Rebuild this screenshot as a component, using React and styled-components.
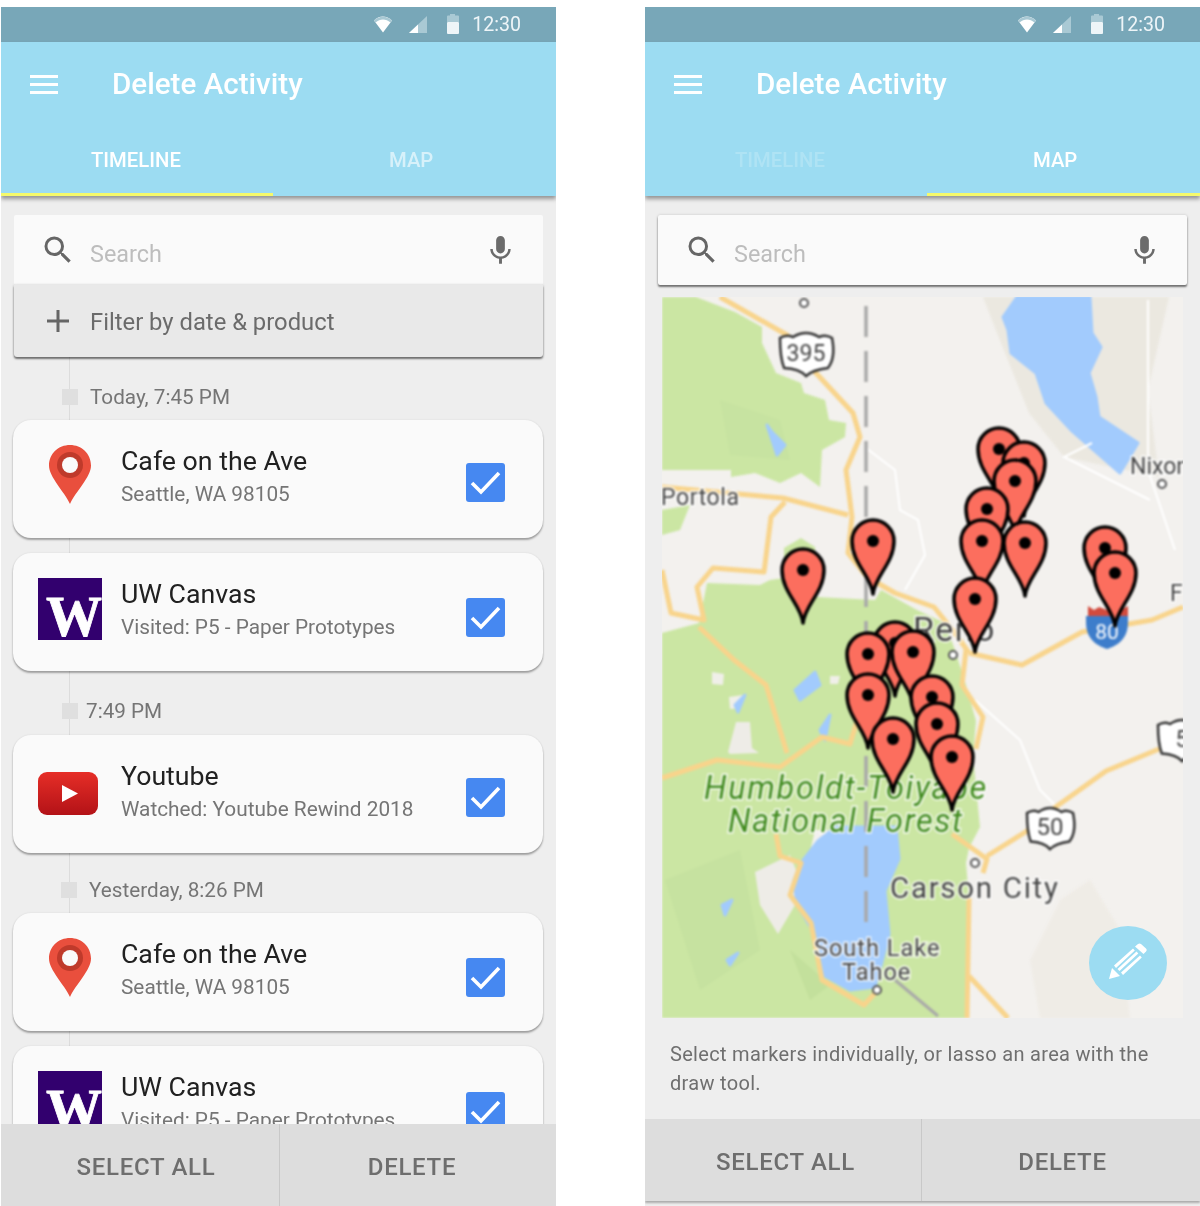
import React from "react";
import styled, { createGlobalStyle } from "styled-components";

const Global = createGlobalStyle`
  html, body { margin: 0; padding: 0; background: #fff; }
  * { box-sizing: border-box; }
  #root { font-family: Roboto, "Liberation Sans", sans-serif; }
`;

const Page = styled.div`
  width: 1200px; height: 1206px; overflow: hidden;
  display: flex; gap: 89px; padding: 7px 0 0 1px;
  align-items: flex-start;
`;
const Phone = styled.div`
  width: 555px; height: 1199px; flex: none;
  display: flex; flex-direction: column;
  background: #eeeeee; overflow: hidden;
  filter: blur(0.35px);
`;
const StatusBar = styled.div`
  height: 35px; flex: none; background: #78a7b8;
  display: flex; align-items: center; justify-content: flex-end;
  padding-right: 35px; color: #eef5f8;
  font-size: 19.6px; font-weight: 400;
`;
const StatusIcons = styled.svg`
  width: 90px; height: 35px; margin-right: 8px; flex: none;
`;
const AppBar = styled.header`
  position: relative; z-index: 2; height: 154px; flex: none;
  background: #9cdcf2; color: #fff;
  display: flex; flex-direction: column;
  box-shadow: 0 3px 4px rgba(0,0,0,.38);
`;
const Toolbar = styled.div`
  height: 84px; flex: none; display: flex; align-items: center; padding-left: 29px;
`;
const Burger = styled.div`
  width: 28px; height: 19px; margin-right: 54px; flex: none;
  border-top: 3px solid #fff; border-bottom: 3px solid #fff;
  display: flex; align-items: center;
  &::before { content: ""; display: block; width: 100%; height: 3px; background: #fff; }
`;
const Title = styled.h1`
  margin: 0; font-size: 29.6px; font-weight: 500; line-height: 34px;
`;
const Tabs = styled.div`
  flex: 1; display: flex;
`;
const Tab = styled.div`
  width: ${p => p.$w}px; flex: none;
  padding: 22px 0 0 ${p => p.$pad}px;
  font-size: 20.3px; font-weight: 500; line-height: 24px;
  color: rgba(255,255,255,${p => p.$dim});
  border-bottom: 3px solid ${p => p.$active ? "#f5f96a" : "transparent"};
`;
const Body = styled.div`
  flex: 1; min-height: 0; position: relative; overflow: hidden;
  padding: 19px 13px 0;
  &::before {
    content: ""; position: absolute; left: 68px; top: 161px; bottom: 0; width: 1px;
    background: #dcdcdc; display: ${p => p.$rail ? "block" : "none"};
  }
`;
const SearchCard = styled.div`
  position: relative; height: 70px; background: #fafafa; border-radius: 2px;
  display: flex; align-items: center; padding: 0 25px 0 26px;
  box-shadow: 0 0 3px rgba(0,0,0,.16), ${p => p.$raised ? "0 2px 2px rgba(0,0,0,.5)" : "none"};
`;
const SearchText = styled.span`
  flex: 1; margin-left: 14px; padding-top: 8px; font-size: 23.4px; color: #bdbdbd;
`;
const FilterRow = styled.div`
  position: relative; height: 72px; background: #e9e9e9;
  border-radius: 0 0 3px 3px;
  display: flex; align-items: center; padding-left: 33px; gap: 21px;
  font-size: 23.8px; color: #6b6b6b;
  box-shadow: 0 0 3px rgba(0,0,0,.2), 0 2px 2px rgba(0,0,0,.5);
`;
const FilterLabel = styled.span`
  padding-top: 1px;
`;
const TimeRow = styled.div`
  position: relative; height: 24px; display: flex; align-items: center;
  margin: ${p => p.$top}px 0 ${p => p.$bottom}px ${p => p.$sq}px;
  font-size: 20.7px; color: #757575;
`;
const Square = styled.span`
  width: 16px; height: 16px; background: #dfdfdf; flex: none;
  margin-right: ${p => p.$gap}px;
`;
const Card = styled.article`
  position: relative; height: 118px; margin: 0 0 ${p => p.$gap || 0}px -1px;
  background: #fafafa; border-radius: 18px;
  box-shadow: 0 0 2px rgba(0,0,0,.1), 0 2px 2px rgba(0,0,0,.32);
  display: flex;
`;
const IconSlot = styled.div`
  width: 108px; flex: none; display: flex; justify-content: center;
  padding: ${p => p.$top}px 0 0 ${p => p.$left}px;
`;
const CardText = styled.div`
  flex: 1; padding-top: 23px;
`;
const CardTitle = styled.div`
  font-size: 26.7px; line-height: 36px; color: #212121;
`;
const CardSub = styled.div`
  font-size: 20.8px; line-height: 30px; color: #757575;
`;
const Check = styled.div`
  width: 39px; height: 39px; flex: none; border-radius: 3px;
  background: #4688f1; margin: ${p => p.$top}px 38px 0 0;
  display: flex; align-items: center; justify-content: center;
`;
const ActionBar = styled.div`
  position: relative; z-index: 2; height: 82px; flex: none; background: #dddddd;
  display: flex; margin-bottom: ${p => p.$bottom || 0}px;
  box-shadow: ${p => p.$bottom ? "0 2px 2px rgba(0,0,0,.28)" : "none"};
`;
const Action = styled.div`
  width: ${p => p.$w}px; flex: ${p => p.$w ? "none" : 1};
  display: flex; align-items: center; justify-content: center;
  font-size: 24px; font-weight: 500; letter-spacing: .7px; color: #6e6e6e;
  border-right: ${p => p.$w ? "1px solid #c8c8c8" : "none"};
  padding: ${p => p.$pt || 0}px ${p => p.$pr || 0}px 0 ${p => p.$pl || 0}px;
`;
const MapFrame = styled.div`
  position: relative; height: 721px; width: 521px; margin: 12px 0 0 4px; overflow: hidden;
`;
const MapSvg = styled.svg`
  display: block; width: 521px; height: 721px;
`;
const MapBlur = styled.g`
  filter: blur(1px);
`;
const Fab = styled.div`
  position: absolute; left: 427px; top: 629px; width: 78px; height: 74px; border-radius: 50%;
  background: #9cdcf2; display: flex; align-items: center; justify-content: center;
`;
const Caption = styled.p`
  margin: 22px 0 0 12px; width: 510px;
  font-size: 20px; line-height: 29px; letter-spacing: .31px; color: #6f6f6f;
`;
const PlaceLabel = styled.text`
  font-family: Roboto, "Liberation Sans", sans-serif;
  font-size: ${p => p.$size}px;
  font-style: ${p => p.$italic ? "italic" : "normal"};
  fill: ${p => p.$fill || "#444"};
  stroke: rgba(255,255,255,.85); stroke-width: 3px; paint-order: stroke;
  letter-spacing: ${p => p.$ls || 0}px;
`;
const ShieldText = styled.text`
  font-family: Roboto, "Liberation Sans", sans-serif;
  font-size: ${p => p.$size}px; fill: ${p => p.$fill || "#444"}; text-anchor: middle;
`;
const LogoLetter = styled.text`
  font-family: "Liberation Serif", serif; font-weight: 700; fill: #fff; text-anchor: middle;
  stroke: #fff; stroke-width: .8px;
`;

const PinIcon = () => (
  <svg width="42" height="59" viewBox="0 0 42 59">
    <path d="M21 59C15 46 0 32 0 20.5 0 8.5 9.5 0 21 0s21 8.5 21 20.5C42 32 27 46 21 59z" fill="#e94f3d" />
    <circle cx="21" cy="20" r="13" fill="#bf3a2b" />
    <circle cx="21" cy="20" r="8" fill="#fafafa" />
  </svg>
);
const UwIcon = () => (
  <svg width="64" height="62" viewBox="0 0 64 62">
    <rect width="64" height="62" fill="#32006e" />
    <LogoLetter x="36" y="58" fontSize="58" textLength="56" lengthAdjust="spacingAndGlyphs">W</LogoLetter>
  </svg>
);
const YtIcon = () => (
  <svg width="60" height="43" viewBox="0 0 60 43">
    <defs>
      <linearGradient id="ytg" x1="0" y1="0" x2="0" y2="1">
        <stop offset="0" stopColor="#e62e27" />
        <stop offset="1" stopColor="#b31217" />
      </linearGradient>
    </defs>
    <rect width="60" height="43" rx="9" fill="url(#ytg)" />
    <path d="M24 13l16 8.5L24 30z" fill="#fff" />
  </svg>
);
const CheckMark = () => (
  <svg width="31" height="25" viewBox="0 0 31 25">
    <path d="M2 13l9 9L29 3" fill="none" stroke="#fff" strokeWidth="3.6" />
  </svg>
);
const SearchIcon = () => (
  <svg width="36" height="36" viewBox="0 0 24 24" fill="#666">
    <path d="M15.5 14h-.79l-.28-.27A6.471 6.471 0 0 0 16 9.5 6.5 6.5 0 1 0 9.5 16c1.61 0 3.09-.59 4.23-1.57l.27.28v.79l5 4.99L20.49 19l-4.99-5zm-6 0C7.01 14 5 11.99 5 9.5S7.01 5 9.5 5 14 7.01 14 9.5 11.99 14 9.5 14z" />
  </svg>
);
const MicIcon = () => (
  <svg width="35" height="35" viewBox="0 0 24 24" fill="#6b6b6b">
    <path d="M12 14c1.66 0 2.99-1.34 2.99-3L15 5c0-1.66-1.34-3-3-3S9 3.34 9 5v6c0 1.66 1.34 3 3 3zm5.3-3c0 3-2.54 5.1-5.3 5.1S6.7 14 6.7 11H5c0 3.41 2.72 6.23 6 6.72V21h2v-3.28c3.28-.48 6-3.3 6-6.72h-1.7z" />
  </svg>
);
const PlusIcon = () => (
  <svg width="22" height="22" viewBox="0 0 22 22">
    <path d="M11 0v22M0 11h22" stroke="#666" strokeWidth="3" />
  </svg>
);
const PencilIcon = () => (
  <svg width="40" height="40" viewBox="0 0 40 40" fill="#fff">
    <path d="M1 36l3-11 8 8z" />
    <path d="M6 22.5L25 5.5l1.8 2L8 25zM9.5 26L28.5 8.5l1.8 2L11.5 28zM13 29.5L32 12.5l1.8 2L15 32z" />
    <path d="M27 3.5l3-2.5c1-.8 2-.8 3 0l5 4.5c.9 1 .9 2 0 3l-2.5 2.5z" />
  </svg>
);

const Status = () => (
  <>
    <StatusIcons viewBox="0 0 90 35">
      <path d="M0 13.5C5 8 12.5 8 18 13.5l-9 12z" fill="#fff" />
      <path d="M0 13.5C5 8.5 13 8.5 18 13.5l-1.6 2C12 11.5 6 11.5 1.6 15.5z" fill="#a9c9d4" />
      <path d="M53 9v17H35z" fill="#a9c9d4" />
      <path d="M35 26l9-8.5V26z" fill="#fff" />
      <rect x="73" y="15" width="12" height="12" rx="1" fill="#eef5f8" />
      <path d="M73 15V9.500q0-1 1-1h2V7h5v1.500h3q1 0 1 1V15z" fill="#a9c9d4" />
    </StatusIcons>
    <span>12:30</span>
  </>
);

const Header = ({ mapActive }) => (
  <>
    <StatusBar><Status /></StatusBar>
    <AppBar>
      <Toolbar>
        <Burger />
        <Title>Delete Activity</Title>
      </Toolbar>
      {mapActive ? (
        <Tabs>
          <Tab $w={282} $pad={90} $dim={0.2}>TIMELINE</Tab>
          <Tab $w={273} $pad={106} $dim={1} $active>MAP</Tab>
        </Tabs>
      ) : (
        <Tabs>
          <Tab $w={272} $pad={90} $dim={1} $active>TIMELINE</Tab>
          <Tab $w={283} $pad={116} $dim={0.6}>MAP</Tab>
        </Tabs>
      )}
    </AppBar>
  </>
);

const Search = ({ raised }) => (
  <SearchCard $raised={raised}>
    <SearchIcon />
    <SearchText>Search</SearchText>
    <MicIcon />
  </SearchCard>
);

const Activity = ({ icon, iconTop, iconLeft = 5, title, sub, checkTop, gap }) => (
  <Card $gap={gap}>
    <IconSlot $top={iconTop} $left={iconLeft}>{icon}</IconSlot>
    <CardText>
      <CardTitle>{title}</CardTitle>
      <CardSub>{sub}</CardSub>
    </CardText>
    <Check $top={checkTop}><CheckMark /></Check>
  </Card>
);

const forests = [
  "662,297 696,297 735,312 762,327 762,343 776,373 801,383 804,393 825,400 829,420 846,423 845,437 822,450 820,487 801,473 780,483 755,473 731,477 731,470 662,470",
  "662,510 690,505 680,530 662,535",
  "707,583 760,585 770,580 784,578 784,548 801,538 815,547 817,597 875,600 881,590 917,610 945,623 955,650 966,685 976,721 973,756 980,827 969,848 966,863 969,898 969,1018 662,1018 662,633 699,623",
];
const patches = [
  ["#f0efe9", "712,672 724,674 723,685 712,684"],
  ["#f0efe9", "729,697 743,695 741,708 730,709"],
  ["#eeece7", "728,752 736,722 750,722 752,748 759,753 730,754"],
  ["#f0efe9", "830,676 840,676 838,684 830,684"],
  ["#eeece7", "755,872 790,855 800,880 795,905 778,934 760,905"],
  ["#f3f1ee", "815,830 845,830 830,855 808,860"],
  ["#f3f1ee", "865,830 897,830 896,852 880,845"],
  ["#c6e2a0", "665,880 740,850 760,950 700,990"],
  ["#c7e3a1", "720,400 780,420 790,460 730,455"],
  ["#c3e09c", "810,1000 790,950 830,985"],
];
const waters = [
  "1017,297 1090,297 1092,333 1101,347 1089,373 1096,397 1099,417 1138,443 1120,473 1071,430 1046,403 1036,373 1011,353 1008,330 1003,317",
  "801,863 818,841 836,827 896,827 899,859 885,891 889,934 882,962 875,987 850,990 825,976 815,934 797,905 794,880",
  "767,425 772,432 785,445 777,455 772,440",
  "795,690 815,672 820,685 800,700",
  "820,730 830,715 825,740",
  "735,705 745,695 738,712",
  "722,905 732,900 725,915",
  "727,960 738,953 730,965",
];
const roads = [
  "720,297 787,335 815,372 853,413 860,437 846,470 852,517 848,553 867,577 895,593 934,607 955,633 969,653",
  "969,653 1022,665 1082,632 1152,620 1183,607",
  "662,487 783,498 848,515",
  "785,502 771,517 764,572 713,568 697,587 704,620 671,613 662,570",
  "699,627 734,660 766,685 787,753",
  "662,778 717,760 780,767 822,737 850,744 857,721 852,700",
  "966,650 962,685 983,717 976,749",
  "952,834 987,859 983,873",
  "987,856 1027,831 1057,806 1106,771 1159,749",
  "776,834 780,856 801,863 790,895 811,923 822,980 864,1005 878,990",
  "969,898 967,1018",
  "969,976 1008,1018",
];
const whiteRoads = [
  "866,448 895,470 900,510 918,520 925,555 905,590",
  "1092,443 1064,457 1150,500",
  "1148,300 1148,470 1175,550",
  "975,700 1020,740 1040,790 1060,810",
];
const pins = [
  [803, 570], [873, 541], [999, 449], [1024, 463], [1015, 481], [987, 509],
  [982, 541], [1025, 543], [975, 599], [1105, 548], [1115, 573],
  [895, 643], [868, 654], [913, 652], [932, 697], [868, 695], [937, 724], [893, 739], [952, 757],
];
const towns = [[804, 303], [953, 655], [1162, 484], [975, 863], [877, 990]];

const Shield = ({ x, y, w, h, label, size }) => (
  <g>
    <path
      d={`M${x - w / 2} ${y - h / 2 + 5}q6 -4 ${w * 0.25} -1q${w * 0.25} -8 ${w * 0.5} 0q${w * 0.25 - 6} -3 ${w * 0.25} 1q4 ${h * 0.5} -${w * 0.08} ${h * 0.75}q-${w * 0.3} 2 -${w * 0.42} ${h * 0.2}q-${w * 0.12} -${h * 0.18} -${w * 0.42} -${h * 0.2}q-${w * 0.08} -${h * 0.25} -${w * 0.08} -${h * 0.75}z`}
      fill="#fff" stroke="#333" strokeWidth="2.500"
    />
    <ShieldText x={x} y={y + 8} $size={size}>{label}</ShieldText>
  </g>
);

const Marker = ({ x, y }) => (
  <g transform={`translate(${x} ${y})`}>
    <path d="M0 53C-2 35-21 22-21 0A21 21 0 1 1 21 0C21 22 2 35 0 53z" fill="#fc6e5e" stroke="#000" strokeWidth="3.500" strokeLinejoin="round" />
    <circle r="6" fill="#000" />
  </g>
);

const MapArt = () => (
  <MapSvg viewBox="662 297 521 721">
    <rect x="662" y="297" width="521" height="721" fill="#f3f1ee" />
    <MapBlur>
      <polygon points="983,297 1169,297 1148,390 1159,477 1064,457 1029,413 997,333" fill="#ebe8e0" />
      <polygon points="1060,900 1030,960 1040,1018 1130,1018 1120,930 1090,880" fill="#efece6" />
      {forests.map(p => <polygon key={p} points={p} fill="#cbe6a3" />)}
      {patches.map(([c, p]) => <polygon key={p} points={p} fill={c} />)}
      {waters.map(p => <polygon key={p} points={p} fill="#a2cbfd" stroke="#a2cbfd" strokeWidth="3" strokeLinejoin="round" />)}
      {whiteRoads.map(p => <polyline key={p} points={p} fill="none" stroke="#fff" strokeWidth="2" />)}
      {roads.map(p => <polyline key={p} points={p} fill="none" stroke="#f8d48c" strokeWidth="5" strokeLinejoin="round" />)}
      <line x1="866" y1="306" x2="866" y2="935" stroke="#a9a9a9" strokeWidth="3.500" strokeDasharray="31 14" />
      <line x1="895" y1="980" x2="938" y2="1016" stroke="#a9a9a9" strokeWidth="3" />
      {towns.map(([x, y]) => <circle key={x} cx={x} cy={y} r="4" fill="#fff" stroke="#555" strokeWidth="2" />)}
      <Shield x={806} y={353} w={52} h={40} label="395" size={23} />
      <Shield x={1050} y={827} w={46} h={38} label="50" size={24} />
      <Shield x={1182} y={739} w={48} h={38} label="5" size={24} />
      <path d="M1086 616h42v6c0 16-9 23-21 27-12-4-21-11-21-27z" fill="#3d7dcb" />
      <path d="M1088 606l6 4 5-3 8 3 8-3 6 3 7-4v10h-40z" fill="#d24b3e" />
      <ShieldText x={1107} y={639} $size={21} $fill="#fff">80</ShieldText>
      <PlaceLabel x="661" y="505" $size={23} $ls={0.6}>Portola</PlaceLabel>
      <PlaceLabel x="1130" y="474" $size={23}>Nixon</PlaceLabel>
      <PlaceLabel x="1170" y="601" $size={23}>F</PlaceLabel>
      <PlaceLabel x="913" y="641" $size={34} $ls={1.4}>Reno</PlaceLabel>
      <PlaceLabel x="704" y="799" $size={32.500} $italic $fill="#3f8a1c" $ls={1.7}>Humboldt-Toiyabe</PlaceLabel>
      <PlaceLabel x="728" y="832" $size={32.500} $italic $fill="#3f8a1c" $ls={1.4}>National Forest</PlaceLabel>
      <PlaceLabel x="890" y="898" $size={29.500} $ls={1.7}>Carson City</PlaceLabel>
      <PlaceLabel x="814" y="956" $size={23.500} $ls={1}>South Lake</PlaceLabel>
      <PlaceLabel x="842" y="980" $size={23.500} $ls={1}>Tahoe</PlaceLabel>
      {pins.map(([x, y]) => <Marker key={`${x}-${y}`} x={x} y={y} />)}
    </MapBlur>
  </MapSvg>
);

export default function App() {
  return (
    <Page>
      <Global />
      <Phone>
        <Header />
        <Body $rail>
          <Search />
          <FilterRow><PlusIcon /><FilterLabel>Filter by date &amp; product</FilterLabel></FilterRow>
          <TimeRow $top={28} $bottom={11} $sq={48}><Square $gap={12} />Today, 7:45 PM</TimeRow>
          <Activity icon={<PinIcon />} iconTop={25} title="Cafe on the Ave" sub="Seattle, WA 98105" checkTop={43} gap={15} />
          <Activity icon={<UwIcon />} iconTop={25} title="UW Canvas" sub="Visited: P5 - Paper Prototypes" checkTop={45} />
          <TimeRow $top={28} $bottom={12} $sq={48}><Square $gap={8} />7:49 PM</TimeRow>
          <Activity icon={<YtIcon />} iconTop={37} iconLeft={1} title="Youtube" sub="Watched: Youtube Rewind 2018" checkTop={43} />
          <TimeRow $top={25} $bottom={11} $sq={47}><Square $gap={12} />Yesterday, 8:26 PM</TimeRow>
          <Activity icon={<PinIcon />} iconTop={25} title="Cafe on the Ave" sub="Seattle, WA 98105" checkTop={45} gap={15} />
          <Activity icon={<UwIcon />} iconTop={25} title="UW Canvas" sub="Visited: P5 - Paper Prototypes" checkTop={46} />
        </Body>
        <ActionBar>
          <Action $w={279} $pt={3} $pl={12}>SELECT ALL</Action>
          <Action $pt={3} $pr={12}>DELETE</Action>
        </ActionBar>
      </Phone>
      <Phone>
        <Header mapActive />
        <Body>
          <Search raised />
          <MapFrame>
            <MapArt />
            <Fab><PencilIcon /></Fab>
          </MapFrame>
          <Caption>Select markers individually, or lasso an area with the draw tool.</Caption>
        </Body>
        <ActionBar $bottom={5}>
          <Action $w={277} $pt={4} $pl={5}>SELECT ALL</Action>
          <Action $pt={4} $pl={3}>DELETE</Action>
        </ActionBar>
      </Phone>
    </Page>
  );
}
